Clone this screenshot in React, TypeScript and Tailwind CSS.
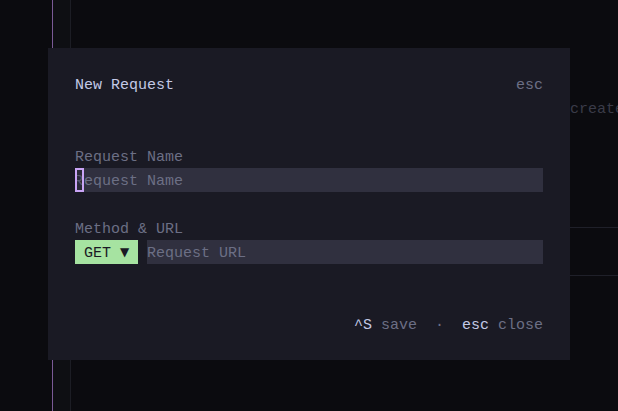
import React from "react";

const mono = "font-['Liberation_Mono','DejaVu_Sans_Mono',monospace]";
const t = "relative top-[2px]";

function Dialog() {
  return (
    <div className="absolute left-[48px] top-[48px] w-[522px] h-[312px] bg-[#1a1a24] px-[27px] py-[24px] flex flex-col text-[15px] leading-[24px]">
      {/* title row */}
      <div className="flex justify-between h-[24px]">
        <span className={`${t} text-[#c3c9e6]`}>New Request</span>
        <span className={`${t} text-[#6c6f85]`}>esc</span>
      </div>
      <div className="h-[48px]" />

      {/* name */}
      <div className="h-[24px]">
        <span className={`${t} text-[#6c6f85]`}>Request Name</span>
      </div>
      <div className="flex bg-[#30303f] h-[24px]">
        <span className="w-[9px] h-[24px] border-2 border-[#c9a4f5] bg-[#2a2a38] text-[#55576b] overflow-hidden flex justify-center">
          <span className="-ml-[2px]">R</span>
        </span>
        <span className={`${t} text-[#6c6f85]`}>equest Name</span>
      </div>
      <div className="h-[24px]" />

      {/* method & url */}
      <div className="h-[24px]">
        <span className={`${t} text-[#6c6f85]`}>Method &amp; URL</span>
      </div>
      <div className="flex h-[24px] gap-[9px]">
        <div className="bg-[#a6e3a1] text-[#1a1a24] w-[63px] flex items-center pl-[9px] whitespace-pre">
          <span className={t}>GET </span>
          <span className="font-['DejaVu_Sans',sans-serif] text-[12px] leading-none">▼</span>
        </div>
        <div className="flex-1 bg-[#30303f] text-[#6c6f85]">
          <span className={t}>Request URL</span>
        </div>
      </div>

      <div className="flex-1" />

      {/* footer */}
      <div className={`flex justify-end whitespace-pre h-[24px] ${t}`}>
        <span className="text-[#c3c9e6]">^S</span>
        <span className="text-[#6c6f85]"> save  ·  </span>
        <span className="text-[#c3c9e6]">esc</span>
        <span className="text-[#6c6f85]"> close</span>
      </div>
    </div>
  );
}

export default function App() {
  return (
    <div className={`relative w-[618px] h-[411px] overflow-hidden bg-[#0b0b0f] ${mono}`}>
      <div className="flex h-full">
        {/* left rail */}
        <div className="w-[52px] shrink-0" />
        <div className="w-px bg-[#7a5a96] shrink-0" />
        <div className="w-[17px] bg-[#0e0f13] shrink-0" />
        <div className="w-px bg-[#1c1d24] shrink-0" />

        {/* main */}
        <div className="flex-1 flex flex-col text-[15px] leading-[24px] overflow-hidden">
          <div className="h-[96px]" />
          <div className="pl-[499px] whitespace-nowrap text-[#3a3b48] h-[24px]">
            <span className={t}>create</span>
          </div>
          <div className="h-[107px]" />
          <div className="h-[49px] border-y border-[#1f2029]" />
        </div>
      </div>

      <Dialog />
    </div>
  );
}
